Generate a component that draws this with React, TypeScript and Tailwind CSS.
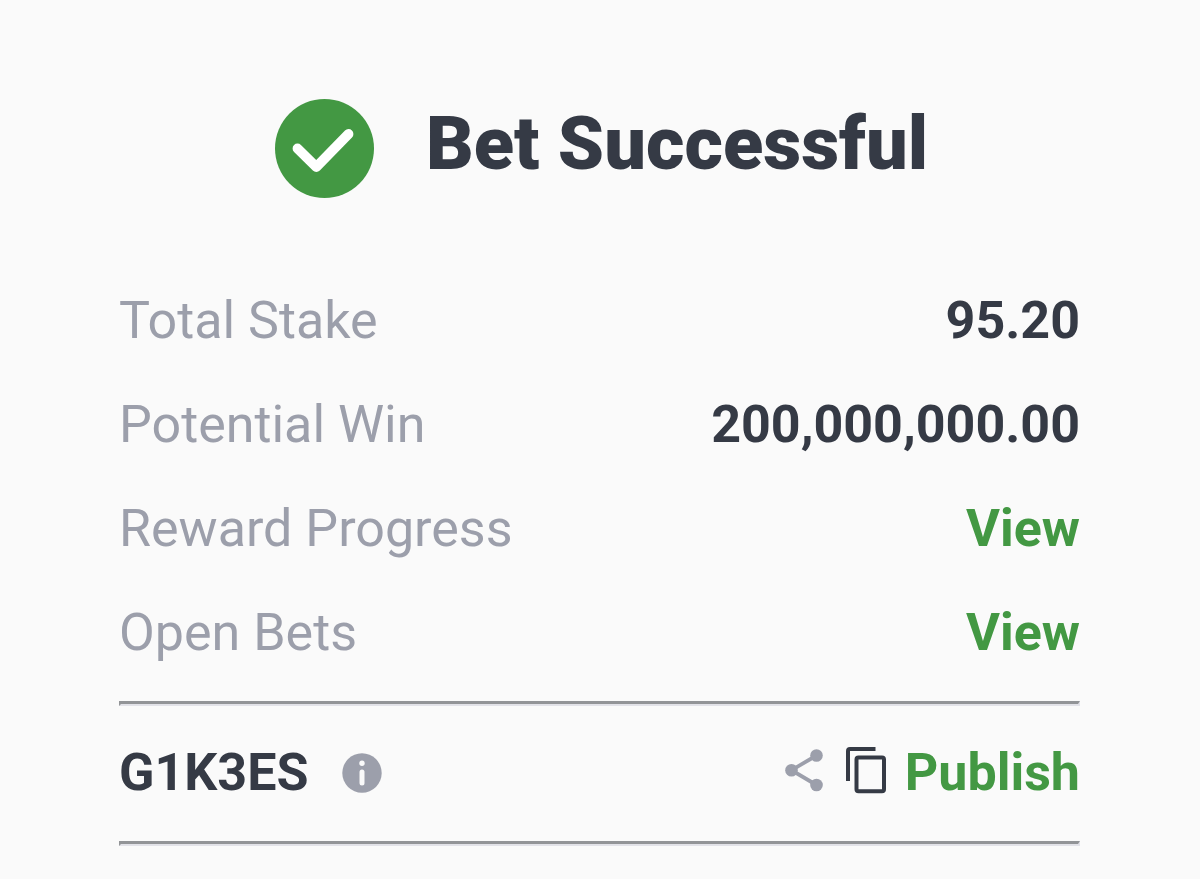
const green = "text-[#439843]";

const rows = [
  { label: "Total Stake", value: "95.20" },
  { label: "Potential Win", value: "200,000,000.00" },
  { label: "Reward Progress", href: "#reward-progress" },
  { label: "Open Bets", href: "#open-bets" },
];

function CheckIcon() {
  return (
    <svg viewBox="0 0 99 99" className="size-[99px] shrink-0" aria-hidden="true">
      <circle cx="49.5" cy="49.5" r="49.5" fill="#439843" />
      <path
        d="M22.5 49.5 L41.3 68 L73.5 35"
        fill="none"
        stroke="#fff"
        strokeWidth="9.8"
        strokeLinecap="round"
        strokeLinejoin="round"
      />
    </svg>
  );
}

function InfoIcon() {
  return (
    <svg viewBox="0 0 40 40" className="size-10" aria-hidden="true">
      <circle cx="20" cy="20" r="19.7" fill="#9c9fab" />
      <circle cx="20" cy="10.2" r="2.7" fill="#fafafa" />
      <path
        d="M20 19v11"
        fill="none"
        stroke="#fafafa"
        strokeWidth="5"
        strokeLinecap="round"
      />
    </svg>
  );
}

function ShareIcon() {
  return (
    <svg viewBox="0 0 42 48" className="h-12 w-[42px]" aria-hidden="true">
      <path
        d="M31.5 6.5 L6.5 21.2 L31.5 36"
        fill="none"
        stroke="#9c9fab"
        strokeWidth="3.8"
      />
      <circle cx="31.5" cy="6.5" r="6.3" fill="#9c9fab" />
      <circle cx="6.5" cy="21.2" r="6.3" fill="#9c9fab" />
      <circle cx="31.5" cy="36" r="6.3" fill="#9c9fab" />
    </svg>
  );
}

function CopyIcon() {
  return (
    <svg viewBox="0 0 40 52" className="h-13 w-10" aria-hidden="true">
      <path
        d="M2 34V4a2 2 0 0 1 2-2h25.5"
        fill="none"
        stroke="#353a45"
        strokeWidth="4"
      />
      <rect
        x="10.5"
        y="10.5"
        width="27.5"
        height="33.7"
        rx="2"
        fill="none"
        stroke="#353a45"
        strokeWidth="4"
      />
    </svg>
  );
}

function Divider() {
  return (
    <hr className="border-x-2 border-t-3 border-b-2 border-t-[#929497] border-r-[#e2e2e8] border-b-[#e2e2e8] border-l-[#929497]" />
  );
}

export default function App() {
  return (
    <main className="min-h-screen bg-[#fafafa] pt-[99px] pr-30 pl-[119px] font-['Roboto',sans-serif] text-[52px] leading-[60px] text-[#353a45]">
      <header className="flex justify-center gap-13 pl-1">
        <CheckIcon />
        <h1 className="text-[74px] leading-[90px] font-black">
          Bet Successful
        </h1>
      </header>

      <dl className="mt-[93px] mb-[38px] flex flex-col gap-11">
        {rows.map((row) => (
          <div key={row.label} className="flex justify-between">
            <dt className="text-[#9c9fab]">{row.label}</dt>
            <dd className="font-bold">
              {row.href ? (
                <a href={row.href} className={green}>
                  View
                </a>
              ) : (
                row.value
              )}
            </dd>
          </div>
        ))}
      </dl>

      <Divider />
      <section className="flex items-center justify-between pt-[37px] pb-[38px] font-bold">
        <div className="flex items-center gap-[34px]">
          <span>G1K3ES</span>
          <button type="button" aria-label="Booking code info">
            <InfoIcon />
          </button>
        </div>
        <div className="flex items-center gap-[19px]">
          <button type="button" aria-label="Share">
            <ShareIcon />
          </button>
          <button type="button" aria-label="Copy code">
            <CopyIcon />
          </button>
          <button type="button" className={green}>
            Publish
          </button>
        </div>
      </section>
      <Divider />
    </main>
  );
}
